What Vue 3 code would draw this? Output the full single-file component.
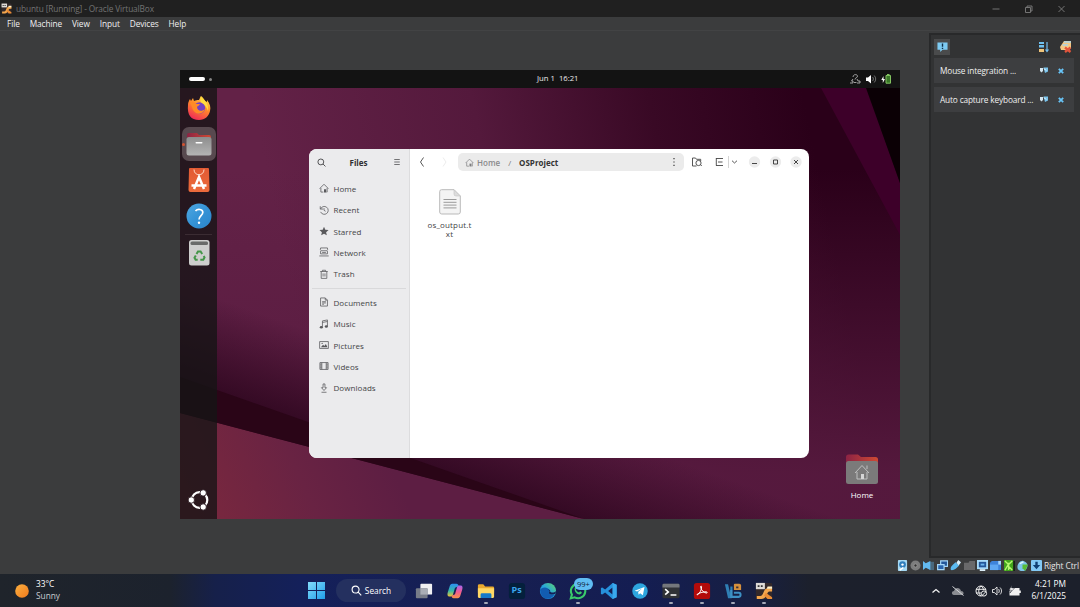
<script setup>
const menus = ['File', 'Machine', 'View', 'Input', 'Devices', 'Help']
const notices = ['Mouse integration ...', 'Auto capture keyboard ...']
const places = [
  { icon: 'home', label: 'Home' },
  { icon: 'recent', label: 'Recent' },
  { icon: 'star', label: 'Starred' },
  { icon: 'network', label: 'Network' },
  { icon: 'trash', label: 'Trash' },
]
const folders = [
  { icon: 'doc', label: 'Documents' },
  { icon: 'music', label: 'Music' },
  { icon: 'picture', label: 'Pictures' },
  { icon: 'video', label: 'Videos' },
  { icon: 'download', label: 'Downloads' },
]
const apps = [
  { icon: 'taskview' },
  { icon: 'copilot' },
  { icon: 'explorer', open: true },
  { icon: 'ps', text: 'Ps' },
  { icon: 'edge' },
  { icon: 'whatsapp', open: true, badge: '99+' },
  { icon: 'vscode' },
  { icon: 'telegram' },
  { icon: 'terminal', open: true },
  { icon: 'acrobat', open: true },
  { icon: 'vbox', open: true },
  { icon: 'vm', open: true },
]
const indicators = ['hdd', 'cd', 'audio', 'net', 'usb', 'shared', 'display', 'record', 'cpu', 'mouse', 'key']
</script>

<template>
  <svg class="defs" width="0" height="0">
    <defs>
      <linearGradient id="gFox" x1=".8" y1="0" x2=".3" y2="1"><stop offset="0" stop-color="#ffe14a" /><stop offset=".45" stop-color="#ff8a2a" /><stop offset="1" stop-color="#f02a58" /></linearGradient>
      <linearGradient id="gTab" x1="0" x2="1"><stop offset="0" stop-color="#8c2344" /><stop offset="1" stop-color="#cf4a33" /></linearGradient>
      <linearGradient id="gGrey" x1="0" y1="0" x2="0" y2="1"><stop offset="0" stop-color="#8d8d8d" /><stop offset="1" stop-color="#b4b4b4" /></linearGradient>
      <linearGradient id="gBag" x1="0" y1="0" x2="0" y2="1"><stop offset="0" stop-color="#e25a33" /><stop offset="1" stop-color="#ec6b3c" /></linearGradient>
      <linearGradient id="gHelp" x1="0" y1="0" x2="1" y2="1"><stop offset="0" stop-color="#4fa8e2" /><stop offset=".5" stop-color="#3593d6" /><stop offset="1" stop-color="#2b84cb" /></linearGradient>
      <linearGradient id="gSun" x1="0" y1="0" x2="1" y2="1"><stop offset="0" stop-color="#fbb040" /><stop offset="1" stop-color="#f07a1c" /></linearGradient>
      <linearGradient id="gWin" x1="0" y1="0" x2="1" y2="1"><stop offset="0" stop-color="#83dcfb" /><stop offset="1" stop-color="#1f9eea" /></linearGradient>
      <linearGradient id="gEdge" x1="0" y1="1" x2="1" y2="0"><stop offset="0" stop-color="#1266c2" /><stop offset=".5" stop-color="#27a5dc" /><stop offset="1" stop-color="#5fd66c" /></linearGradient>
      <linearGradient id="gCopA" x1="0" y1="0" x2="0" y2="1"><stop offset="0" stop-color="#2d8ff0" /><stop offset=".55" stop-color="#35b8a8" /><stop offset="1" stop-color="#f3c531" /></linearGradient>
      <linearGradient id="gCopB" x1="0" y1="0" x2="0" y2="1"><stop offset="0" stop-color="#a666ee" /><stop offset=".5" stop-color="#ef5a93" /><stop offset="1" stop-color="#f79047" /></linearGradient>
    </defs>

    <!-- places -->
    <symbol id="home" viewBox="0 0 16 16"><path d="M1 9 8 2l7 7M3 8v6.500h4M13 8v6.500h-1" class="ln" /><path d="M8 15v-5h3.500v5z" class="fl" /></symbol>
    <symbol id="recent" viewBox="0 0 16 16"><path d="M2 2v4.500h4.500M2.500 6.500A6.300 6.300 0 1 1 2.600 11M8 5v3.500L10.500 10" class="ln" /></symbol>
    <symbol id="star" viewBox="0 0 16 16"><path d="m8 1 2.100 4.800 5.200.5-3.900 3.500 1.100 5.100L8 12.200l-4.500 2.700 1.100-5.100L.7 6.300l5.200-.5z" class="fl" /></symbol>
    <symbol id="network" viewBox="0 0 16 16"><path d="M2.500 1.500h11q1 3-1 4.500h-9q-2-1.500-1-4.500zM2.500 6.500v4.500h11V6.500M5 8.700h6M.5 14.300h15" class="ln" /></symbol>
    <symbol id="trash" viewBox="0 0 16 16"><path d="M2 4h12M5.500 4V2h5v2M3.500 4v11h9V4M6.500 7v5M9.500 7v5" class="ln" /></symbol>
    <symbol id="doc" viewBox="0 0 16 16"><path d="M2.500 1.500H10L13.500 5v9.500h-11zM10 1.500V5h3.500M5 7.500h6M5 9.500h6M5 11.500h3" class="ln" /></symbol>
    <symbol id="music" viewBox="0 0 16 16"><path d="M5.500 12.500V3l8-1.500v10M5.500 5.500l8-1.500" class="ln" /><ellipse cx="3.700" cy="13" rx="2.500" ry="2" class="fl" /><ellipse cx="11.700" cy="12" rx="2.500" ry="2" class="fl" /></symbol>
    <symbol id="picture" viewBox="0 0 16 16"><path d="M1 2.500h14v11H1z" class="ln" /><path d="m3 11.500 3.500-4 2 2L11 6.500l2.500 5z" class="fl" /><circle cx="5" cy="5.500" r="1" class="fl" /></symbol>
    <symbol id="video" viewBox="0 0 16 16"><path d="M1.500 2.500h13v11h-13zM4.500 2.500v11M11.500 2.500v11" class="ln" /><path d="M1.500 5h3M1.500 8h3M1.500 11h3M11.500 5h3M11.500 8h3M11.500 11h3" class="ln" /></symbol>
    <symbol id="download" viewBox="0 0 16 16"><path d="M6.500 1.500h3v6H12L8 12 4 7.500h2.500zM4 14.800h8" class="ln" /></symbol>

    <!-- taskbar -->
    <symbol id="taskview" viewBox="0 0 20 20"><rect x="6" y="2" width="13" height="12" rx="1" fill="#f0f0f2" /><rect x="1" y="7" width="13" height="11" rx="1" fill="#777c88" /><path d="M6 7h8v7H6z" fill="#a9adb5" /></symbol>
    <symbol id="copilot" viewBox="0 0 20 20"><path d="M7 2h4.500c1.800 0 2 1 2.600 2.700L10 6.500 7.800 14c-.5 1.500-1.200 2.200-2.600 2.200H3.800C1.500 16.200 1.200 14 2 11.500L4 5c.7-2 1.400-3 3-3z" fill="url(#gCopA)" /><path d="M13 18H8.500c-1.700 0-2-1-2.600-2.700l4.100-1.800L12.200 6c.5-1.500 1.200-2.200 2.600-2.200h1.400c2.300 0 2.600 2.200 1.800 4.700L16 15c-.7 2-1.400 3-3 3z" fill="url(#gCopB)" /></symbol>
    <symbol id="explorer" viewBox="0 0 20 20"><path d="M1 4a1.500 1.500 0 0 1 1.500-1.500H7L9 5h8.500A1.500 1.500 0 0 1 19 6.500V12H1z" fill="#e9a92e" /><path d="M1 7h18v9.500a1.200 1.200 0 0 1-1.200 1.200H2.200A1.200 1.200 0 0 1 1 16.500z" fill="#ffd865" /><path d="M4 17.700V14a1.500 1.500 0 0 1 1.500-1.500h9A1.500 1.500 0 0 1 16 14v3.700z" fill="#1779c9" /></symbol>
    <symbol id="ps" viewBox="0 0 20 20"><rect x="1" y="1" width="18" height="18" rx="3.500" fill="#04203c" /></symbol>
    <symbol id="edge" viewBox="0 0 20 20"><circle cx="10" cy="10" r="9" fill="url(#gEdge)" /><path d="M1.100 9C3 5 10 5 11.500 9c.6 1.600-.7 2.300-.7 3.300 0 1.200 2.700 2.200 6.600.9C14 20.300 5.500 19.500 3 15" fill="#125cb0" /><path d="M9.500 8.500c2.500 0 2.500 2.300 1.500 3.200-.8 1.400 2.500 3.300 7.300 1.300l.7-3c-2 2.300-6 1.800-6.500.8 0-2-1-3-3-2.300z" fill="#141f55" /></symbol>
    <symbol id="whatsapp" viewBox="0 0 20 20"><path d="M2 18.200 3.200 14A8 8 0 1 1 6.300 17z" fill="none" stroke="#3acb6b" stroke-width="2.300" /><path d="M6.500 6c1-.9 1.600-.3 2 1.200l-.8 1.400c.8 1.500 1.900 2.400 3.400 3l1.200-1.200c1.800.7 2.300 1.100 1.700 2.200-2.500 3.500-9.400-1.600-7.500-6.600z" fill="#3acb6b" /></symbol>
    <symbol id="vscode" viewBox="0 0 20 20"><path d="m14 1 4.500 2v14L14 19 5.700 11.600 2.500 14 1 13.200V6.800L2.500 6l3.200 2.400zM14 6.200 9 10l5 3.800z" fill="#2691dc" fill-rule="evenodd" /><path d="M14 1l4.500 2v14L14 19z" fill="#39a9ee" /></symbol>
    <symbol id="telegram" viewBox="0 0 20 20"><circle cx="10" cy="10" r="8.600" fill="#2da5de" /><path d="m4 9.800 11-4.300-1.800 9.300-3.100-2.200-1.600 1.700-.6-3.200 4.400-4-5.500 3.400z" fill="#fff" /></symbol>
    <symbol id="terminal" viewBox="0 0 20 20"><rect x=".5" y="2" width="19" height="16" rx="1.500" fill="#303236" /><path d="M.5 6V3.500A1.500 1.500 0 0 1 2 2h16a1.500 1.500 0 0 1 1.500 1.500V6z" fill="#74777c" /><path d="m3.500 8 3.500 3-3.500 3M9.500 14.500H16" fill="none" stroke="#fff" stroke-width="1.800" /></symbol>
    <symbol id="acrobat" viewBox="0 0 20 20"><rect x="1" y="1" width="18" height="18" rx="3" fill="#b30b0a" /><path d="M4.500 14.500c3-1.500 5.500-6.500 5-9.500-.3-1.200-1.500-.5-1 1 1 3.500 3.500 6 6.500 6.300 1.300 0 1-1.400-.5-1.400-3.200 0-6 .8-9 2.300-1.200.7-1.400 1.300-1 1.300z" fill="none" stroke="#fff" stroke-width="1.100" /></symbol>
    <symbol id="vbox" viewBox="0 0 20 20"><path d="M1 2.500h3.500L7 13V5h2.500v11l-1 2H4.500z" fill="#2f7fb4" /><path d="M8 9v7.500h8.500c2.500 0 2.500-4.500 0-4.500H11" fill="none" stroke="#3d90c4" stroke-width="2.300" /><path d="M11 3q0-1 1-1h5q2 0 2 2v5h-8z" fill="#d5903d" /><path d="M13.500 5h2.500v2h-2.500z" fill="#372c36" /></symbol>
    <symbol id="vm" viewBox="0 0 20 20"><rect x="1" y="1" width="18" height="18" rx="1.500" fill="#33292a" /><path d="M2 19v-3.500h4C10 15.500 9 7 14 7h5v3.500h-3C13 10.500 13 19 7 19z" fill="#f3a64d" /><path d="M13 7.500h6V5h-5z" fill="#fff0c8" /><path d="M12 12l7 5v2h-5l-4-4z" fill="#e98c35" /><path d="M1 1h10v7H1z" fill="#dedbd7" /><path d="M3 3.500h2v2H3zM6.500 3.500h2v2h-2z" fill="#333" /></symbol>

    <!-- machine indicators -->
    <symbol id="hdd" viewBox="0 0 12 12"><rect x="1" y="0" width="10" height="12" rx="1" fill="#a5d8f2" /><circle cx="6" cy="5" r="3.700" fill="#2f7ebc" /><circle cx="6" cy="5" r="1.300" fill="#fff" /><path d="M3 11l4-3" stroke="#fff" stroke-width="1.500" /></symbol>
    <symbol id="cd" viewBox="0 0 12 12"><circle cx="6" cy="6" r="5.500" fill="#7c7d7d" /><circle cx="6" cy="6" r="1.800" fill="#333" stroke="#999" /></symbol>
    <symbol id="audio" viewBox="0 0 12 12"><path d="M7 2h5v9H7z" fill="#49687d" /><path d="M0 1l3 2.500L8 1v10L3 8.500 0 11z" fill="#63baf0" /></symbol>
    <symbol id="net" viewBox="0 0 12 12"><path d="M4 1h7.500v6H4z" fill="#24579a" stroke="#a5d8fa" stroke-width="1.300" /><path d="M.7 5h7v5.500h-7z" fill="#2a65ac" stroke="#a5d8fa" stroke-width="1.300" /></symbol>
    <symbol id="usb" viewBox="0 0 12 12"><path d="M1 11c-1-3 1-5 5-8.500l4 3.500c-3 3-5 5.500-9 5z" fill="#5bbaf0" /><path d="m7 3 2-3 3 2.500L9.500 6z" fill="#d9effb" /></symbol>
    <symbol id="shared" viewBox="0 0 12 12"><path d="M0 3h5l1-2h6v10H0z" fill="#69696a" /></symbol>
    <symbol id="display" viewBox="0 0 12 12"><path d="M0 0h12v10H0z" fill="#a9dcfa" /><path d="M2 2h8v6H2z" fill="#24579a" /><path d="M3 10h6v2H3z" fill="#dceef8" /><path d="M4 4h4v2H4z" fill="#6cb5ef" /></symbol>
    <symbol id="record" viewBox="0 0 12 12"><path d="M0 3l2-2h10v10H0z" fill="#3e83da" /><path d="M0 5h9v6H0z" fill="#5fa7f2" /><path d="M9 1h3v4H9z" fill="#a7d4fc" /></symbol>
    <symbol id="cpu" viewBox="0 0 12 12"><path d="M0 0h10v12H0z" fill="#43a51c" /><path d="m1 1 4 4 4-4M1 11l3-5 5 5M5 3v8" stroke="#b5f66f" stroke-width="1.500" fill="none" /><path d="M10.300 1h1.400v11h-1.400z" fill="#0b1b06" /></symbol>
    <symbol id="mouse" viewBox="0 0 12 12"><path d="M1 10c-2-4 2-10 6-9s6 5 3 9-7 2-9 0z" fill="#7dc5ea" /><path d="M6 5h6l-3 7-3-3z" fill="#58bc36" /><path d="M3 4l4-2" stroke="#e5f6fc" stroke-width="1.500" /></symbol>
    <symbol id="key" viewBox="0 0 12 12"><rect width="12" height="12" rx="1" fill="#83c9f5" /><path d="M4.700 2h2.600v3.500H10L6 10 2 5.500h2.700z" fill="#103f73" /></symbol>

    <symbol id="pin" viewBox="0 0 8 7"><path d="M0 1h3v3L1.500 5.500 0 4z" fill="#d4e6f0" /><path d="M3.500.5H8v4L5 6z" fill="#79c3ec" /><path d="M4 1.500l2 2" stroke="#fff" /></symbol>
    <symbol id="x" viewBox="0 0 6 6"><path d="M.8.800l4.400 4.400M5.200.800.8 5.200" stroke="#68c4f7" stroke-width="1.800" /></symbol>
  </svg>

  <div class="screen">
    <header class="title">
      <svg class="logo"><use href="#vm" /></svg>
      <span>ubuntu [Running] - Oracle VirtualBox</span>
      <svg class="winbtns" viewBox="0 0 80 10"><path d="M4.500 5h7M37.500 3.500h5v5h-5zM39 3.500V2h5v5h-1.500M70.500 2l6 6M76.500 2l-6 6" fill="none" stroke="#7d7d7d" stroke-width=".9" /></svg>
    </header>
    <nav class="menu"><span v-for="m in menus" :key="m">{{ m }}</span></nav>

    <main class="work">
      <section class="guest">
        <svg class="wall" viewBox="0 0 720 449" preserveAspectRatio="none">
          <defs>
            <linearGradient id="base" gradientUnits="userSpaceOnUse" x1="90" y1="120" x2="620" y2="10"><stop offset="0" stop-color="#632247" /><stop offset=".4" stop-color="#54193c" /><stop offset=".72" stop-color="#390925" /><stop offset="1" stop-color="#2a0019" /></linearGradient>
            <linearGradient id="glow" x1="0" y1="0" x2="0" y2="1"><stop offset=".22" stop-color="#571a3f" stop-opacity="0" /><stop offset=".9" stop-color="#571a3f" stop-opacity=".95" /></linearGradient>
            <linearGradient id="shade" gradientUnits="userSpaceOnUse" x1="150" y1="360" x2="179" y2="278"><stop offset="0" stop-color="#2e071f" stop-opacity=".85" /><stop offset="1" stop-color="#2e071f" stop-opacity="0" /></linearGradient>
            <linearGradient id="low" gradientUnits="userSpaceOnUse" x1="20" y1="449" x2="200" y2="370"><stop offset="0" stop-color="#7a283e" /><stop offset=".55" stop-color="#692343" /><stop offset="1" stop-color="#5d1e43" /></linearGradient>
          </defs>
          <path d="M0 0h720v449H0z" fill="url(#base)" />
          <path d="M0 0h720v449H0z" fill="url(#glow)" />
          <path d="M641 18h46l33 95v52z" fill="#3d0029" />
          <path d="M686 18h34v95z" fill="#0b0005" />
          <path d="M0 120h720v329H0z" fill="url(#shade)" />
          <path d="M0 343v106h404z" fill="url(#low)" />
          <path d="M0 307 404 449 0 343z" fill="#2a0517" />
        </svg>

        <div class="topbar">
          <span class="pill"></span><span class="dot"></span>
          <time>Jun 1&nbsp; 16:21</time>
          <svg class="status" viewBox="0 0 44 12"><g fill="none" stroke="#c4c4c4"><path d="M4 4c0-3 4.500-3 4.500-.8C8.500 5 6 4.500 6 6.500M1 10h3V8H2.500L4 6M8 10h3V8H9L8 6M5 9.500h2.500" stroke-width=".8" /><path d="M23.500 4c1.200 1 1.200 3 0 4M25.200 2.500c2 2 2 5 0 7" stroke-width=".8" opacity=".65" /></g><path d="M17 4.500h2L22 2v8.500L19 8h-2z" fill="#fff" /><path d="M37 2.500h4.500v7.700H37z" fill="#397727" stroke="#82c261" /><path d="M38 1h2.500v1H38z" fill="#82c261" /><path d="M34.500 3v3H36l-2.200 4V7h-1.500z" fill="#fff" /></svg>
        </div>

        <aside class="dock">
          <svg class="app" viewBox="0 0 26 26"><path d="M2 10c0-3 1-4 2-6l1 2 2-3 1 3c2-1 3-1 5-1 1-2 1-3 2-4 3 2 3 4 4 5l2 1v-2c3 4 4 7 3 11-1 5-5 9-11 9C5 25 1 20 2 10z" fill="url(#gFox)" /><circle cx="13.500" cy="13" r="5.700" fill="#7242c2" /><path d="M4 8c3-2 5 0 6 1h4c-1 2-3 2-3 3 0 4 5 5 8 2-2 6-9 6-12 1-1-2-1-4-3-7z" fill="#ff8b26" /><path d="M15 2c5 3 8 9 7 14-1-4-4-7-6-8-2-1-2-4-1-6z" fill="#ffdc3e" /></svg>
          <span class="app active">
            <svg viewBox="0 0 26 24"><path d="M1 3q0-2 2-2h8l2 2h10q2 0 2 2v8H1z" fill="url(#gTab)" /><rect x=".5" y="5" width="25" height="18.500" rx="2.500" fill="url(#gGrey)" /><rect x="9.500" y="10" width="7" height="1.500" rx=".7" fill="#fff" /></svg>
          </span>
          <svg class="app" viewBox="0 0 26 26"><path d="M4 1h18q1 0 1 1l.5 21q0 2-2 2h-17q-2 0-2-2L3 2q0-1 1-1z" fill="url(#gBag)" /><path d="M8 2.500c0 7 10 7 10 0" fill="none" stroke="#ffd9c5" stroke-width="1" /><path d="m8 22 5-12 5 12M5.500 18.500h15" fill="none" stroke="#fff" stroke-width="2.500" /></svg>
          <svg class="app" viewBox="0 0 26 26"><circle cx="13" cy="13" r="12.500" fill="url(#gHelp)" /><path d="M9.500 8c2-2.500 7.500-2 7.300 1.500-.2 3-3.800 3.300-3.800 7" fill="none" stroke="#fff" stroke-width="1.700" /><circle cx="13" cy="19.700" r="1.200" fill="#fff" /></svg>
          <hr />
          <svg class="app bin" viewBox="0 0 26 28"><rect x="3" y="1" width="20.500" height="25.500" rx="2.500" fill="#cdcecd" /><rect x="4.500" y="2.500" width="17.500" height="3.500" rx="1.500" fill="#686a69" /><path d="m10.500 15 1.500-2.500h2.600l1.600 2.500M17.700 17l.8 1.500-1.200 2.200h-3M11.700 20.700H9.600l-1.100-1.900 1.300-2.300" fill="none" stroke="#439648" stroke-width="2" /></svg>
          <svg class="grid" viewBox="0 0 22 22"><circle cx="11.500" cy="11" r="7.800" fill="none" stroke="#fff" stroke-width="2.200" /><g fill="#fff" stroke="#2a1a20" stroke-width=".9"><circle cx="3.300" cy="11" r="3.200" /><circle cx="15.200" cy="3.900" r="3.200" /><circle cx="15.200" cy="18" r="3.200" /></g></svg>
        </aside>
        <i class="running"></i>

        <div class="files">
          <div class="side">
            <div class="sidehead">
              <svg class="i10" viewBox="0 0 16 16"><path d="M10.800 10.800 15 15M12 7A5.200 5.200 0 1 1 1.600 7 5.200 5.200 0 0 1 12 7z" fill="none" stroke="#3a3a3c" stroke-width="1.500" /></svg>
              <b>Files</b>
              <svg class="i8" viewBox="0 0 16 16"><path d="M2.500 3h11M2.500 8h11M2.500 13h11" stroke="#4a4a4c" stroke-width="1.500" /></svg>
            </div>
            <ul>
              <li v-for="p in places" :key="p.label"><svg><use :href="'#' + p.icon" /></svg>{{ p.label }}</li>
              <li class="sep"></li>
              <li v-for="p in folders" :key="p.label"><svg><use :href="'#' + p.icon" /></svg>{{ p.label }}</li>
            </ul>
          </div>
          <div class="content">
            <div class="head">
              <svg class="nav" viewBox="0 0 32 12"><path d="M5.500 1.500 2.500 6l3 4.500" fill="none" stroke="#444" stroke-width=".9" /><path d="m25 1.500 3 4.500-3 4.500" fill="none" stroke="#ececec" /></svg>
              <div class="path">
                <svg class="i10"><use href="#home" /></svg>
                <span>Home</span><em>/</em><b>OSProject</b>
                <svg class="kebab" viewBox="0 0 4 10"><path d="M1.400 1h1.200v1.200H1.400zM1.400 4.400h1.200v1.200H1.400zM1.400 7.800h1.200V9H1.400z" fill="#333" /></svg>
              </div>
              <svg class="tools" viewBox="0 0 112 14"><g fill="none" stroke="#454545" stroke-width=".9"><path d="M5.500 11H1.500V3h3l1 1.300h4.200V6M9.700 9.700l1 1.300" /><circle cx="7.500" cy="8" r="2.600" /><path d="M25 3.500h7M27 7h4.500M25 10.500h7M25.300 3v7.500" /><path d="M41 5.700 43.500 8 46 5.700" /></g><path d="M37.500 1v12" stroke="#c9c9c9" stroke-width=".8" /><g fill="#ececec"><circle cx="63.500" cy="7" r="5.700" /><circle cx="84.500" cy="7" r="5.700" /><circle cx="105" cy="7" r="5.700" /></g><path d="M61 8.500h5M82.500 5h4v4h-4zM103 5l4 4M107 5l-4 4" fill="none" stroke="#333" stroke-width=".9" /></svg>
            </div>
            <div class="file">
              <svg viewBox="0 0 22 26"><path d="M2.500.7H15L21.300 7v16q0 2-2 2H2.700q-2 0-2-2V2.700q0-2 1.800-2z" fill="#f4f4f4" stroke="#b9b9b9" /><path d="M15 .7V5q0 2 2 2h4.300z" fill="#dcdcdc" stroke="#c4c4c4" stroke-width=".6" /><path d="M4.500 10.500h13M4.500 13.300h13M4.500 16.100h13M4.500 18.900h13" stroke="#9a9a9a" /></svg>
              <span>os_output.t<br />xt</span>
            </div>
          </div>
        </div>

        <div class="homeicon">
          <svg viewBox="0 0 34 32"><path d="M1 4q0-2.500 2.500-2.500H13L16 4h14.500Q33 4 33 6.500V14H1z" fill="url(#gTab)" /><rect x="1" y="8" width="32" height="23" rx="2.500" fill="#7b7a7a" /><path d="M10 20l7-7.500 7 7.500M12 19v7h10v-7M22 16v-3.500" fill="none" stroke="#c0c0c0" stroke-width="1" /><path d="M16 21h3v5h-3z" fill="#d6d6d6" /></svg>
          <span>Home</span>
        </div>
      </section>

      <aside class="panel">
        <div class="ptools">
          <span class="on"><svg viewBox="0 0 12 12"><path d="M.5.500h11v8H6L3.500 11 3.500 8.500h-3z" fill="#7dcbf3" /><path d="M6 1.500v3.700M6 6.300v1.300" stroke="#102f45" stroke-width="1.500" /></svg></span>
          <svg class="sort" viewBox="0 0 12 12"><path d="M1 1h5v2H1zM1 4h5v2.500H1z" fill="#6fc0ef" /><path d="M1 8h5v3H1z" fill="#efc47a" /><path d="M9 1v9M7.500 8.500 9 10.500l1.500-2" fill="none" stroke="#75bff0" stroke-width="1.200" /></svg>
          <svg class="clear" viewBox="0 0 12 12"><path d="M4 0h7v7L9 9H1L0 6z" fill="#f2c784" /><path d="M4 1h7M2.500 4H8" stroke="#a9d3e6" stroke-width="1.600" /><path d="m5 6.500 5.500 4.500M10.500 6.500 5 11" stroke="#e2553c" stroke-width="2.300" /></svg>
        </div>
        <div v-for="n in notices" :key="n" class="notice"><span>{{ n }}</span><svg class="pin"><use href="#pin" /></svg><svg class="x"><use href="#x" /></svg></div>
      </aside>
    </main>

    <div class="vmstatus">
      <svg v-for="i in indicators" :key="i"><use :href="'#' + i" /></svg>
      <span>Right Ctrl</span>
    </div>

    <footer class="taskbar">
      <div class="weather">
        <svg viewBox="0 0 14 14"><circle cx="7" cy="7" r="6.800" fill="url(#gSun)" /></svg>
        <p>33°C<br /><small>Sunny</small></p>
      </div>
      <svg class="start" viewBox="0 0 17 17"><path d="M0 0h8v8H0zM9 0h8v8H9zM0 9h8v8H0zM9 9h8v8H9z" fill="url(#gWin)" /></svg>
      <div class="search"><svg viewBox="0 0 12 12"><path d="m7.800 7.800 3.400 3.400M8.800 5A3.800 3.800 0 1 1 1.200 5a3.800 3.800 0 0 1 7.600 0z" fill="none" stroke="#fff" stroke-width="1.200" /></svg>Search</div>
      <div class="apps">
        <span v-for="a in apps" :key="a.icon" :class="{ open: a.open }"><svg><use :href="'#' + a.icon" /></svg><em v-if="a.text">{{ a.text }}</em><b v-if="a.badge">{{ a.badge }}</b></span>
      </div>
      <svg class="tray" viewBox="0 0 92 16">
        <path d="m2.500 9.500 3.500-3 3.500 3" fill="none" stroke="#f2f2f2" stroke-width="1.300" />
        <path d="M24 12c-3-.5-2.500-4 0-4 1-4 6-4 7 0 3 0 3.500 3.500 1 4z" fill="#8b8d92" /><path d="m22.500 3.500 11 9" stroke="#d5d7da" stroke-width="1" />
        <g fill="none" stroke="#f0f0f0" stroke-width="1"><circle cx="51" cy="8" r="5" /><path d="M46 6.300h10M46 10h5M51 3c-3 3-3 7 0 10M51 3c2 1.500 2.500 3 2.500 4" /><circle cx="54" cy="10.500" r="2.600" fill="#1c212c" /><path d="m52.300 12.300 3.500-3.500" /><path d="M62.500 6.500h1.800L67 4v8l-2.700-2.500h-1.800zM68.500 6c1 1 1 3 0 4M70 4.500c2 2 2 5 0 7" stroke-width=".9" /></g>
        <path d="M81 5h8.500v2.500h1.300v2.500h-1.300V12.500H79.500V8z" fill="#f0f0f0" /><path d="M82 2.500 79 7h2.500L80 10l4.500-5h-3z" fill="#fff" stroke="#1c212c" stroke-width=".5" />
      </svg>
      <p class="clock">4:21 PM<br />6/1/2025</p>
    </footer>
  </div>
</template>

<style>
html, body { margin: 0; overflow: hidden; background: #3b3c3d; }
</style>

<style scoped>
* { box-sizing: border-box; }
svg { display: block; flex: none; }
p, ul { margin: 0; padding: 0; list-style: none; }
.defs { position: absolute; }
.ln { fill: none; stroke: #606063; stroke-width: 1.3; }
.fl { fill: #59595c; }

.screen { width: 1080px; height: 607px; display: flex; flex-direction: column; background: #3b3c3d; font-family: "Open Sans", "Noto Sans", sans-serif; overflow: hidden; }
.title { height: 17px; flex: none; background: #202020; display: flex; align-items: center; color: #737373; font-size: 8.3px; padding-left: 1px; }
.title span { margin-left: 4px; white-space: nowrap; letter-spacing: -.12px; }
.logo { width: 11px; height: 11px; }
.winbtns { width: 80px; height: 10px; margin-left: auto; margin-right: 12px; }
.menu { height: 14px; flex: none; display: flex; align-items: center; gap: 10px; padding-left: 7px; font-size: 8.3px; color: #f0f0f0; border-bottom: 1px solid #424344; letter-spacing: -.1px; }

.work { height: 526px; flex: none; display: flex; justify-content: space-between; }
.guest { position: relative; width: 720px; height: 449px; margin: 39px 0 0 180px; background: #54193c; overflow: hidden; }
.wall { position: absolute; inset: 0; width: 720px; height: 449px; }
.topbar { position: relative; height: 18px; background: #131313; display: flex; align-items: center; padding-left: 9px; color: #ececec; font: 7.7px "Open Sans", sans-serif; }
.pill { width: 16px; height: 4px; border-radius: 2px; background: #fff; }
.dot { width: 3px; height: 3px; border-radius: 50%; background: #858585; margin-left: 4px; }
.topbar time { margin-left: 325px; width: 60px; white-space: nowrap; position: relative; top: -1px; }
.status { width: 44px; height: 12px; margin-left: auto; margin-right: 7px; }

.dock { position: relative; width: 37px; height: 431px; background: rgba(20, 20, 20, .78); display: flex; flex-direction: column; align-items: center; padding-top: 7px; }
.app { width: 26px; height: 26px; margin-bottom: 10px; }
.app.active { width: 34px; height: 34px; margin: -4px 0 6px; border-radius: 7px; background: #58494f; display: flex; align-items: center; justify-content: center; }
.active svg { width: 26px; height: 24px; }
.dock hr { width: 27px; height: 1px; border: 0; margin: -5px 0 4px; background: #3b2c33; }
.app.bin { height: 28px; }
.grid { width: 22px; height: 22px; margin-top: auto; margin-bottom: 8px; }
.running { position: absolute; left: 2px; top: 73px; width: 3px; height: 3px; border-radius: 50%; background: #d55230; }

.files { position: absolute; left: 129px; top: 79px; width: 500px; height: 309px; border-radius: 8px; overflow: hidden; display: flex; background: #fff; font-family: "Open Sans", "Noto Sans", sans-serif; color: #444446; font-size: 8px; }
.side { width: 101px; background: #ebebed; border-right: 1px solid #dcdcde; }
.sidehead { height: 26px; display: flex; align-items: center; justify-content: space-between; padding: 0 8px; color: #2f2f31; }
.sidehead b { margin-right: 2px; }
.i10 { width: 9px; height: 9px; }
.i8 { width: 8px; height: 8px; }
.side ul { padding-top: 2.6px; }
.side li { height: 21.4px; display: flex; align-items: center; gap: 4.500px; padding-left: 10px; letter-spacing: .06px; }
.side li svg { width: 10px; height: 10px; }
.side li.sep { height: 1px; margin: 3px 3px; background: #d9d9db; padding: 0; }
.content { flex: 1; }
.head { height: 26px; display: flex; align-items: center; }
.nav { width: 32px; height: 12px; margin-left: 8px; }
.path { width: 226px; height: 18px; margin-left: 8px; border-radius: 5px; background: #ebebeb; display: flex; align-items: center; padding: 0 8px 0 7px; }
.path span { font-weight: 600; color: #8a8a8c; margin-left: 3px; }
.path svg { opacity: .75; }
.path em { font-style: normal; color: #777; margin: 0 8px; }
.path b { color: #333; }
.path .kebab { width: 4px; height: 10px; margin-left: auto; opacity: 1; }
.tools { width: 112px; height: 14px; margin-left: 7px; }
.file { width: 50px; margin: 14px 0 0 14.500px; display: flex; flex-direction: column; align-items: center; text-align: center; line-height: 9.500px; }
.file svg { width: 22px; height: 26px; margin-bottom: 4.500px; }
.file span { letter-spacing: .15px; }

.homeicon { position: absolute; left: 660px; top: 383px; width: 44px; display: flex; flex-direction: column; align-items: center; color: #fff; font: 8px "Open Sans", sans-serif; }
.homeicon svg { width: 34px; height: 32px; margin-bottom: 4px; }

.panel { width: 151px; height: 525px; margin-top: 2px; background: #323334; border: 2px solid #28292a; border-right: 0; padding: 2px 5px 0 3px; }
.ptools { height: 20px; display: flex; align-items: center; margin-bottom: 1px; }
.ptools .on { width: 16px; height: 16px; background: #4a4b4c; display: flex; align-items: center; justify-content: center; }
.ptools svg { width: 12px; height: 12px; }
.ptools .on svg { width: 11px; height: 11px; }
.sort { margin-left: auto; }
.clear { margin-left: 10px; margin-right: 3px; }
.notice { height: 25px; margin-bottom: 4px; margin-right: 1px; background: #3d3e40; display: flex; align-items: center; color: #efefef; font-size: 8.3px; padding: 0 10px 0 6px; }
.notice span { flex: 1; white-space: nowrap; letter-spacing: -.16px; }
.pin { width: 8px; height: 7px; }
.x { width: 6px; height: 6px; margin-left: 10px; }

.vmstatus { height: 17px; flex: none; display: flex; align-items: center; justify-content: flex-end; gap: 2.4px; color: #e6e6e6; font-size: 8.4px; padding-right: 1px; }
.vmstatus svg { width: 11px; height: 11px; }
.vmstatus span { width: 35px; white-space: nowrap; letter-spacing: -.1px; }

.taskbar { height: 33px; flex: none; display: flex; align-items: center; background: linear-gradient(90deg, #1f242b 0, #1c222d 170px, #16204a 215px, #14205a 300px, #171f51 500px, #141d52 640px, #171f42 750px, #1c202c 810px, #1c202b 100%); color: #fff; font-size: 8.3px; line-height: 11.500px; }
.weather { width: 293px; display: flex; align-items: center; gap: 7px; padding-left: 15px; }
.weather p, .clock { padding-bottom: 2px; }
.weather svg { width: 14px; height: 14px; }
.weather small { font-size: 8.3px; color: #c9ccd1; }
.start { width: 17px; height: 17px; margin-left: 15px; }
.search { width: 70px; height: 23px; margin-left: 11px; border-radius: 12px; background: #24305f; display: flex; align-items: center; justify-content: center; gap: 3px; }
.search svg { width: 11px; height: 11px; }
.apps { display: flex; margin-left: 2.500px; }
.apps span { position: relative; width: 30.9px; height: 33px; display: flex; align-items: center; justify-content: center; }
.apps svg { width: 18px; height: 18px; }
.apps .open::after { content: ""; position: absolute; bottom: 3px; left: 13.500px; width: 4px; height: 2px; border-radius: 1px; background: #a4a9b8; }
.apps em { position: absolute; inset: 0 0 1px; line-height: 32px; text-align: center; font-size: 9px; font-style: normal; font-weight: 700; color: #3aa6ee; }
.apps b { position: absolute; left: 11px; top: 4px; width: 19px; height: 12px; border-radius: 6px; background: #60bdf3; color: #10223a; font-size: 7.5px; font-weight: 400; line-height: 12px; text-align: center; }
.tray { width: 92px; height: 16px; margin-left: auto; }
.clock { width: 44px; text-align: right; margin-right: 14px; white-space: nowrap; }
</style>
